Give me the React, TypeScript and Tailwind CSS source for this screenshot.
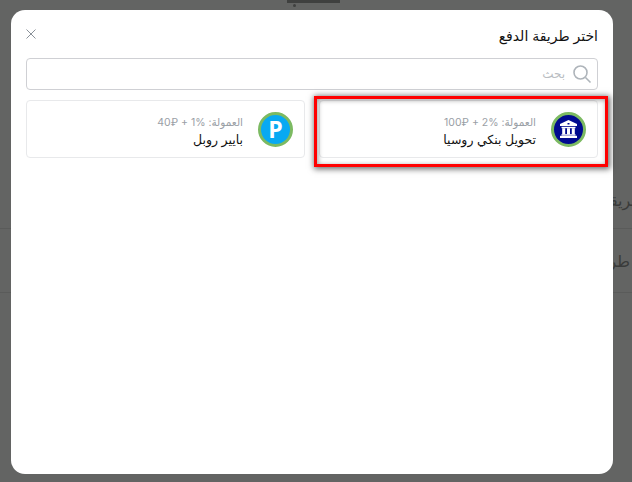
const ARABIC_FONT = "font-['Inter','DejaVu_Sans',sans-serif]";

interface MethodItem {
  readonly title: string;
  readonly amount: string;
  readonly icon: "bank" | "payeer";
}

const METHODS: ReadonlyArray<MethodItem> = [
  { title: "تحويل بنكي روسيا", amount: "100₽ + 2%", icon: "bank" },
  { title: "بايير روبل", amount: "40₽ + 1%", icon: "payeer" },
];

function BankIcon() {
  return (
    <div className="flex h-[35px] w-[35px] shrink-0 items-center justify-center rounded-full border-[3px] border-[#7cba62] bg-[#000a8f]">
      <svg width="17" height="18" viewBox="0 0 17 18" fill="#fff">
        <path fillRule="evenodd" d="M8.5 0 L17 4 V6 H0 V4 Z M7.5 3 H9.5 V4.5 H7.5 Z" />
        <rect x="1.5" y="6.8" width="14" height="1.4" />
        <rect x="2.2" y="8.2" width="3" height="6" />
        <rect x="7" y="8.2" width="3" height="6" />
        <rect x="11.8" y="8.2" width="3" height="6" />
        <rect x="1.5" y="14.2" width="14" height="1.4" />
        <rect x="0" y="15.8" width="17" height="2.2" />
      </svg>
    </div>
  );
}

function PayeerIcon() {
  return (
    <div className="flex h-[35px] w-[35px] shrink-0 items-center justify-center rounded-full border-[3px] border-[#7cba62] bg-[#08a9f2]">
      <span className="font-['Open_Sans',sans-serif] text-[23px] leading-none font-bold text-white">P</span>
    </div>
  );
}

function MethodCard({ item }: { readonly item: MethodItem }) {
  return (
    <div className="flex h-[58px] items-center gap-[15px] rounded border border-[#e8e9eb] bg-white px-[11px]">
      {item.icon === "bank" ? <BankIcon /> : <PayeerIcon />}
      <div className="flex flex-col pt-[6px]">
        <span className="text-[10.5px] leading-[16px] text-[#9aa0a6]">
          العمولة: <span dir="ltr" className="inline-block">{item.amount}</span>
        </span>
        <span className="text-[12.5px] leading-[18px] text-[#111]">{item.title}</span>
      </div>
    </div>
  );
}

export default function App() {
  return (
    <div dir="rtl" className={`relative h-[482px] w-[632px] overflow-hidden bg-[#636463] ${ARABIC_FONT}`}>
      {/* dimmed page behind the dialog */}
      <div className="mr-[292px] h-[3px] w-[53px] bg-[#3f403f]" />
      <div className="mt-[1px] mr-[336px] h-[3px] w-[3px] rounded-full bg-[#3f403f]" />
      <div className="mt-[182px] h-[40px] border-b border-[#5a5b5a] text-[16px] leading-[22px] text-[#3a3b3a]">
        <span className="mr-[-12px]">طريقة</span>
      </div>
      <div className="flex h-[64px] items-center border-b border-[#5a5b5a] text-[16px] text-[#3a3b3a]">
        <span className="mr-[2px]">طر</span>
      </div>

      <div className="absolute top-[10px] left-[11px] h-[464px] w-[602px] rounded-[14px] bg-white px-[15px]">
        <div className="flex h-[48px] items-center justify-between pt-[2px]">
          <h2 className="text-[14px] font-normal text-[#111]">اختر طريقة الدفع</h2>
          <svg width="10" height="10" viewBox="0 0 10 10" stroke="#8a9199" strokeWidth="1" className="mt-[-2px]">
            <path d="M0.5 0.5 L9.5 9.5 M9.5 0.5 L0.5 9.5" />
          </svg>
        </div>
        <div className="flex h-[32px] items-center gap-[7px] rounded border border-[#cfd0d4] px-[5px]">
          <svg width="20" height="20" viewBox="0 0 20 20" fill="none" stroke="#aeb4ba" strokeWidth="1.6">
            <circle cx="8.5" cy="8.5" r="6.5" />
            <path d="M13.5 13.5 L18.5 18.5" />
          </svg>
          <span className="text-[12px] text-[#b9bdc2]">بحث</span>
        </div>
        <div className="mt-[10px] grid grid-cols-2 gap-[14px]">
          {METHODS.map((item) => (
            <MethodCard key={item.icon} item={item} />
          ))}
        </div>
      </div>

      {/* red highlight drawn on top of the screenshot */}
      <div className="absolute top-[96px] left-[314px] h-[71px] w-[294px] border-[3px] border-[#ff0000] shadow-[1px_1px_6px_1px_rgba(0,0,0,0.6),inset_1px_1px_5px_rgba(0,0,0,0.4)]" />
    </div>
  );
}
